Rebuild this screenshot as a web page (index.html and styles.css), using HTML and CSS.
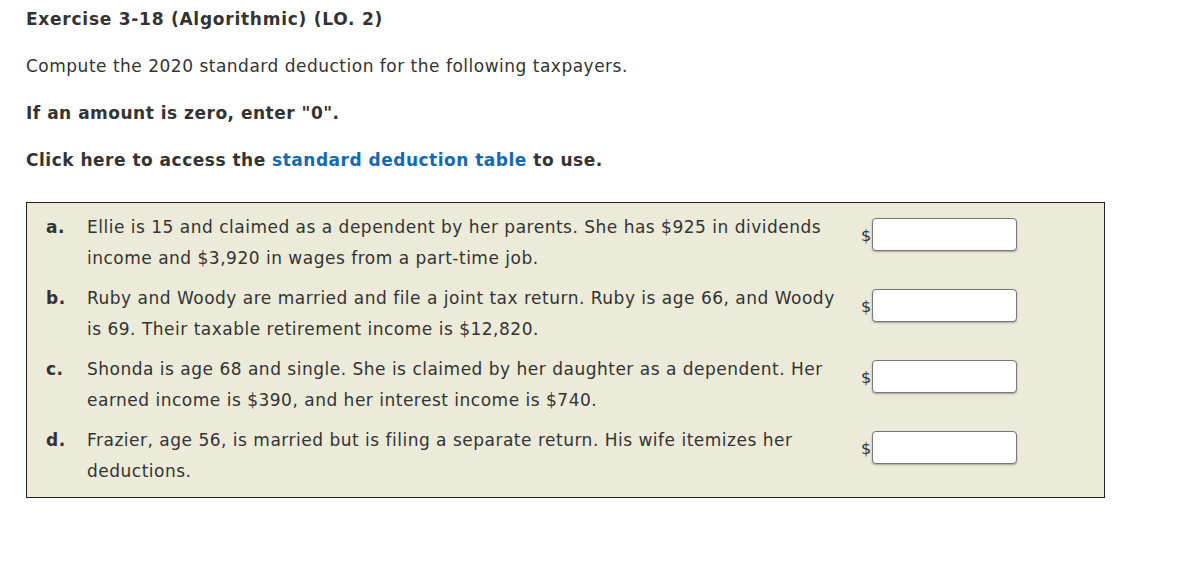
FILE: index.html
```html
<!DOCTYPE html>
<html>
<head>
<meta charset="utf-8">
<link rel="stylesheet" href="styles.css">
</head>
<body>
<div class="page">
  <h1 class="title">Exercise 3-18 (Algorithmic) (LO. 2)</h1>
  <p class="para">Compute the 2020 standard deduction for the following taxpayers.</p>
  <p class="para strong">If an amount is zero, enter "0".</p>
  <p class="para strong">Click here to access the <a class="link" href="#">standard deduction table</a> to use.</p>
  <div class="box">
    <div class="row">
      <div class="label">a.</div>
      <div class="text">Ellie is 15 and claimed as a dependent by her parents. She has $925 in dividends income and $3,920 in wages from a part-time job.</div>
      <div class="answer"><span class="dollar">$</span><input class="field" type="text"></div>
    </div>
    <div class="row">
      <div class="label">b.</div>
      <div class="text">Ruby and Woody are married and file a joint tax return. Ruby is age 66, and Woody is 69. Their taxable retirement income is $12,820.</div>
      <div class="answer"><span class="dollar">$</span><input class="field" type="text"></div>
    </div>
    <div class="row">
      <div class="label">c.</div>
      <div class="text">Shonda is age 68 and single. She is claimed by her daughter as a dependent. Her earned income is $390, and her interest income is $740.</div>
      <div class="answer"><span class="dollar">$</span><input class="field" type="text"></div>
    </div>
    <div class="row">
      <div class="label">d.</div>
      <div class="text">Frazier, age 56, is married but is filing a separate return. His wife itemizes her deductions.</div>
      <div class="answer"><span class="dollar">$</span><input class="field" type="text"></div>
    </div>
  </div>
</div>
</body>
</html>
```
FILE: styles.css
```css
html, body {
  margin: 0;
  padding: 0;
  background: #ffffff;
}
.page {
  padding: 6px 0 0 26px;
  font-family: "DejaVu Sans", Verdana, sans-serif;
  color: #333333;
  font-size: 17px;
  letter-spacing: 0.5px;
}
.title {
  margin: 0;
  font-size: 17px;
  font-weight: bold;
  line-height: 26px;
  letter-spacing: 0.75px;
}
.para {
  margin: 21px 0 0 0;
  line-height: 26px;
}
.strong {
  font-weight: bold;
  letter-spacing: 0.5px;
}
.link {
  color: #1469b4;
  text-decoration: none;
}
.box {
  margin-top: 29px;
  width: 1077px;
  background: #ecead9;
  border: 1px solid #222222;
  padding: 9px 0 10px 0;
  display: flex;
  flex-direction: column;
  gap: 9px;
}
.row {
  display: flex;
  align-items: flex-start;
}
.label {
  width: 41px;
  padding-left: 19px;
  font-weight: bold;
  line-height: 31px;
  flex: none;
}
.text {
  width: 764px;
  line-height: 31px;
  flex: none;
}
.answer {
  display: flex;
  align-items: flex-end;
  margin-left: 10px;
  padding-top: 6px;
  letter-spacing: 0;
}
.dollar {
  font-size: 16px;
  line-height: 18px;
  margin-bottom: 6px;
  margin-right: 1px;
}
.field {
  width: 139px;
  height: 31px;
  box-sizing: content-box;
  padding: 0 2px;
  border: 1px solid #777777;
  border-radius: 4px;
  background: #ffffff;
  box-shadow: 0 1px 2px rgba(0,0,0,0.3);
  margin: 0;
}
```
